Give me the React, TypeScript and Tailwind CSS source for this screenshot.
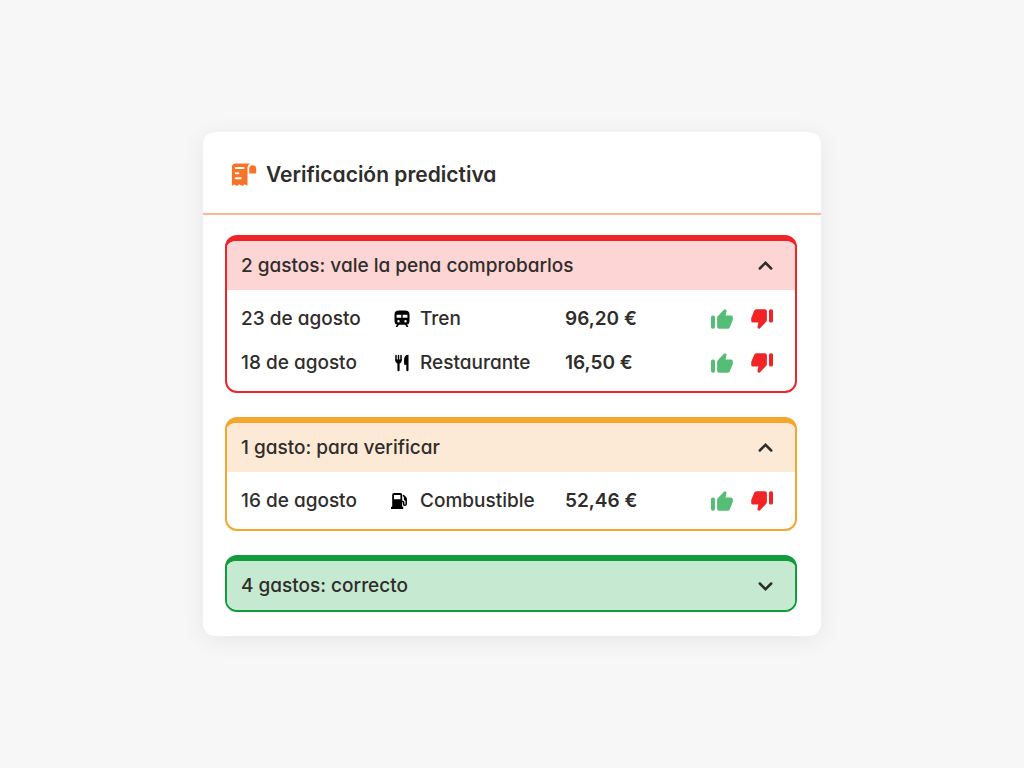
import { useState } from "react";

type Expense = {
  date: string;
  category: string;
  icon: "train" | "restaurant" | "fuel";
  amount: string;
};

type Group = {
  id: string;
  title: string;
  border: string;
  header: string;
  open: boolean;
  expenses: Expense[];
};

const groups: Group[] = [
  {
    id: "comprobar",
    title: "2 gastos: vale la pena comprobarlos",
    border: "border-[#f02427]",
    header: "bg-[#fed5d5]",
    open: true,
    expenses: [
      { date: "23 de agosto", category: "Tren", icon: "train", amount: "96,20 €" },
      { date: "18 de agosto", category: "Restaurante", icon: "restaurant", amount: "16,50 €" },
    ],
  },
  {
    id: "verificar",
    title: "1 gasto: para verificar",
    border: "border-[#f3a72e]",
    header: "bg-[#fdead6]",
    open: true,
    expenses: [
      { date: "16 de agosto", category: "Combustible", icon: "fuel", amount: "52,46 €" },
    ],
  },
  {
    id: "correcto",
    title: "4 gastos: correcto",
    border: "border-[#119c3c]",
    header: "bg-[#c6e9d1]",
    open: false,
    expenses: [],
  },
];

function ReceiptIcon() {
  return (
    <svg width="26" height="24" viewBox="0 0 26 24" aria-hidden="true">
      <path
        fill="#f87328"
        d="M4.5 .5H19C17.300 1.500 16.500 3.200 16.500 5.500V22.800L13.800 21.300 11.200 23 8.500 21.300 5.800 23 3.400 21.500 .9 22.800V4.300C.9 2 2.300 .5 4.500 .5Z"
      />
      <path fill="#f87328" d="M18.200 10.500V5.700A3.500 3.500 0 0 1 25.200 5.700V9.700A.8 .8 0 0 1 24.400 10.500Z" />
      <path
        stroke="#fff"
        strokeWidth="1.900"
        strokeLinecap="round"
        d="M4.700 5H12.600M4.700 10.200H7.400M4.700 15.300H9.800"
      />
    </svg>
  );
}

function TrainIcon() {
  return (
    <svg width="16" height="18" viewBox="0 0 16 18" aria-hidden="true">
      <path
        fillRule="evenodd"
        d="M5 .5H11Q15.500 .5 15.500 4.500V11.500Q15.500 14 13 14.500L14.200 16.400Q14.400 17 13.700 17H12.600L11.200 14.700H4.800L3.400 17H2.300Q1.600 17 1.800 16.400L3 14.500Q.5 14 .5 11.500V4.500Q.5 .5 5 .5ZM2.600 4.800V7.800H7.300V4.800ZM8.700 4.800V7.800H13.400V4.800ZM4.500 10.100A1.200 1.200 0 1 0 4.500 12.500A1.200 1.200 0 1 0 4.500 10.100ZM11.500 10.100A1.200 1.200 0 1 0 11.500 12.500A1.200 1.200 0 1 0 11.500 10.100Z"
      />
    </svg>
  );
}

function CutleryIcon() {
  return (
    <svg width="16" height="18" viewBox="0 0 16 18" aria-hidden="true">
      <path stroke="#000" strokeWidth="1.500" strokeLinecap="round" fill="none" d="M2 1.500V6M4.500 1.500V6M7 1.500V6" />
      <path d="M1.200 5.500H7.800C7.800 7.800 7 8.900 5.600 9.400V16.200A1.100 1.100 0 0 1 3.400 16.200V9.400C2 8.900 1.200 7.800 1.200 5.500Z" />
      <path d="M14.500 .8V16.200A1.100 1.100 0 0 1 12.300 16.200V10.800H10.100V5.500C10.100 2.800 11.800 .8 14.500 .8Z" />
    </svg>
  );
}

function FuelIcon() {
  return (
    <svg width="24" height="18" viewBox="0 0 24 18" aria-hidden="true">
      <path
        fillRule="evenodd"
        d="M4 1H10.500Q12.200 1 12.200 2.700V14.700H13.200V17H1V14.700H2.200V2.700Q2.200 1 4 1ZM4 3V7.300H10.400V3Z"
      />
      <path
        fill="none"
        stroke="#000"
        strokeWidth="1.500"
        strokeLinecap="round"
        strokeLinejoin="round"
        d="M12 9.500H12.700Q13.700 9.500 13.700 10.500V12.200Q13.700 13.300 14.900 13.300T16.200 12.200V7Q16.200 6.200 15.600 5.600L13.500 3.600M14.600 5V7.200Q14.600 8 16 8"
      />
    </svg>
  );
}

function ThumbIcon({ className }: { className?: string }) {
  return (
    <svg width="22" height="20" viewBox="0 0 22 20" fill="currentColor" className={className} aria-hidden="true">
      <rect x="0" y="6.400" width="4" height="13.400" rx="1.700" />
      <path d="M6.100 8.900Q6.100 7.900 6.800 7.200L12.900 .8Q13.900 -.2 15 .7 15.700 1.300 15.500 2.200L14.600 6.400H20.100Q21.800 6.400 21.800 8.100V10.500Q21.800 11.100 21.600 11.600L18.800 18.300Q18.200 19.800 16.700 19.800H8.100Q6.100 19.800 6.100 17.800Z" />
    </svg>
  );
}

function Chevron({ open }: { open: boolean }) {
  return (
    <svg
      width="15"
      height="10"
      viewBox="0 0 15 10"
      fill="none"
      stroke="#2f2d2b"
      strokeWidth="2.500"
      strokeLinecap="round"
      className={open ? "" : "rotate-180"}
      aria-hidden="true"
    >
      <path d="M1.800 7.500L7.500 1.800L13.200 7.500" />
    </svg>
  );
}

function CategoryIcon({ icon }: { icon: Expense["icon"] }) {
  if (icon === "train") return <TrainIcon />;
  if (icon === "fuel") return <FuelIcon />;
  return <CutleryIcon />;
}

function ExpenseGroup({ group }: { group: Group }) {
  const [open, setOpen] = useState(group.open);

  return (
    <section className={`overflow-hidden rounded-xl border-2 border-t-6 ${group.border}`}>
      <button
        type="button"
        aria-expanded={open}
        onClick={() => setOpen(!open)}
        className={`flex h-[49px] w-full items-center justify-between pr-[22px] pl-[14px] text-left font-medium ${group.header}`}
      >
        {group.title}
        <Chevron open={open} />
      </button>

      {open && group.expenses.length > 0 && (
        <div className="pt-[7px] pb-[6px]">
          <table className="w-full table-fixed">
            <colgroup>
              <col className="w-[160px]" />
              <col className="w-[33px]" />
              <col />
              <col className="w-[120px]" />
              <col className="w-[116px]" />
            </colgroup>
            <tbody>
              {group.expenses.map((expense) => (
                <tr key={expense.date} className="h-11">
                  <td className="pl-[14px] font-medium">{expense.date}</td>
                  <td>
                    <div className="flex w-[30px] justify-center">
                      <CategoryIcon icon={expense.icon} />
                    </div>
                  </td>
                  <td className="font-medium">{expense.category}</td>
                  <td className="pl-[6px] font-semibold">{expense.amount}</td>
                  <td>
                    <div className="flex justify-end gap-[18px] pr-[22px]">
                      <button type="button" aria-label="Correcto" className="text-[#56bd76]">
                        <ThumbIcon />
                      </button>
                      <button type="button" aria-label="Incorrecto" className="text-[#f02427]">
                        <ThumbIcon className="rotate-180" />
                      </button>
                    </div>
                  </td>
                </tr>
              ))}
            </tbody>
          </table>
        </div>
      )}
    </section>
  );
}

export default function App() {
  return (
    <div className="flex min-h-screen items-center justify-center bg-[#f7f7f7] font-[Inter,sans-serif] text-[19px] leading-7 text-[#2f2d2b] [font-feature-settings:'cv11']">
      <main className="w-full max-w-[618px] rounded-xl bg-white shadow-[0_4px_24px_rgba(0,0,0,0.07)]">
        <header className="flex h-[83px] items-center gap-[9px] border-b-2 border-[#fcb797] pt-1 pl-7">
          <ReceiptIcon />
          <h1 className="text-[21px] font-semibold">Verificación predictiva</h1>
        </header>
        <div className="flex flex-col gap-6 pt-5 pr-6 pb-6 pl-[22px]">
          {groups.map((group) => (
            <ExpenseGroup key={group.id} group={group} />
          ))}
        </div>
      </main>
    </div>
  );
}
